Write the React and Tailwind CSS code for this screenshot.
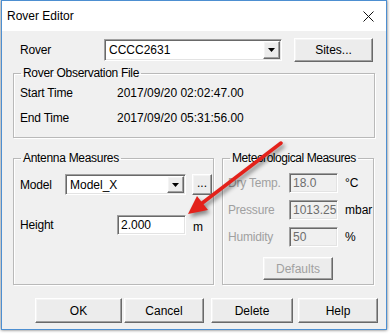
const sunken =
  'border border-t-[#a0a0a0] border-l-[#a0a0a0] border-r-white border-b-white shadow-[inset_1px_1px_0_#696969,inset_-1px_-1px_0_#e3e3e3]';
const raised =
  'border border-t-white border-l-white border-r-[#696969] border-b-[#696969] shadow-[inset_-1px_-1px_0_#a0a0a0,inset_1px_1px_0_#f4f4f4] bg-[#ececec]';
const group =
  'border border-[#b9b9b9] shadow-[inset_1px_1px_0_#fff,1px_1px_0_#fff] m-0 p-0 min-w-0';

const DropArrow = () => (
  <div className={`${raised} w-[17px] h-full flex items-center justify-center shrink-0`}>
    <svg width="7" height="4" viewBox="0 0 7 4">
      <path d="M0 0h7L3.5 4z" fill="#000" />
    </svg>
  </div>
);

const Combo = ({ value, className }) => (
  <div className={`${sunken} bg-white flex items-stretch p-[1px] ${className}`}>
    <div className="flex-1 flex items-center pl-[3px] text-[12px]">{value}</div>
    <DropArrow />
  </div>
);

const Button = ({ children, className, disabled }) => (
  <button
    type="button"
    className={`${raised} flex items-center justify-center text-[12px] ${disabled ? 'text-[#a0a0a0]' : 'text-black'} ${className}`}
  >
    {children}
  </button>
);

const Legend = ({ children, className = 'tracking-[-0.3px]' }) => (
  <legend className={`ml-[7px] px-[2px] text-[12px] leading-[14px] ${className}`}>{children}</legend>
);

const MeteoRow = ({ label, value, unit, className }) => (
  <div className={`flex items-center h-[20px] ${className}`}>
    <div className="w-[61px] text-[#a0a0a0] tracking-[-0.2px]">{label}</div>
    <div className={`${sunken} w-[49px] h-[20px] bg-[#f0f0f0] flex items-center pl-[3px] text-[#6d6d6d] text-[12px]`}>
      {value}
    </div>
    <div className="ml-[7px] text-[12px]">{unit}</div>
  </div>
);

export default function App() {
  return (
    <div className="w-[390px] h-[334px] bg-white relative overflow-hidden" style={{ fontFamily: '"Liberation Sans", Arial, sans-serif' }}>
      <div className="ml-[1px] w-[386px] h-[330px] border border-[#4d8fd1] bg-[#f0f0f0] flex flex-col shadow-[0_0_3px_rgba(0,0,0,0.6)] text-[12px] text-black">
        {/* title bar */}
        <div className="h-[30px] bg-white flex items-center justify-between pl-[5px] pr-[12px] shrink-0">
          <span className="text-[12px]">Rover Editor</span>
          <svg width="11" height="11" viewBox="0 0 11 11">
            <path d="M0.5 0.5L10.5 10.5M10.5 0.5L0.5 10.5" stroke="#111" strokeWidth="1" />
          </svg>
        </div>

        <div className="flex flex-col pl-[11px]">
          {/* rover row */}
          <div className="flex items-center h-[24px] mt-[7px] pl-[7px]">
            <div className="w-[84px] tracking-[-0.2px]">Rover</div>
            <Combo value="CCCC2631" className="w-[178px] h-[22px]" />
            <Button className="ml-[12px] w-[79px] h-[24px]">Sites...</Button>
          </div>

          {/* observation file */}
          <fieldset className={`${group} mt-[4px] w-[362px] h-[72px]`}>
            <Legend>Rover Observation File</Legend>
            <div className="flex items-center h-[16px] mt-[5px] pl-[6px]">
              <div className="w-[97px] tracking-[-0.2px]">Start Time</div>
              <div className="text-[12px]">2017/09/20 02:02:47.00</div>
            </div>
            <div className="flex items-center h-[16px] mt-[9px] pl-[6px]">
              <div className="w-[97px] tracking-[-0.2px]">End Time</div>
              <div className="text-[12px]">2017/09/20 05:31:56.00</div>
            </div>
          </fieldset>

          <div className="flex mt-[13px] gap-[8px]">
            {/* antenna */}
            <fieldset className={`${group} w-[201px] h-[134px]`}>
              <Legend>Antenna Measures</Legend>
              <div className="flex items-center h-[21px] mt-[9px] pl-[6px]">
                <div className="w-[45px] tracking-[-0.2px]">Model</div>
                <Combo value="Model_X" className="w-[121px] h-[21px]" />
                <Button className="ml-[6px] w-[20px] h-[21px] text-[#444] pb-[4px]">...</Button>
              </div>
              <div className="flex items-center h-[20px] mt-[20px] pl-[6px]">
                <div className="w-[97px] tracking-[-0.2px]">Height</div>
                <div className={`${sunken} w-[69px] h-[20px] bg-white flex items-center pl-[3px] text-[12px]`}>2.000</div>
                <div className="ml-[7px] mt-[3px]">m</div>
              </div>
            </fieldset>

            {/* meteorological */}
            <fieldset className={`${group} w-[152px] h-[134px] flex flex-col`}>
              <Legend className="tracking-[-0.45px]">Meteorological Measures</Legend>
              <div className="pl-[5px] flex flex-col">
                <MeteoRow label="Dry Temp." value="18.0" unit="°C" className="mt-[8px]" />
                <MeteoRow label="Pressure" value="1013.25" unit="mbar" className="mt-[7px]" />
                <MeteoRow label="Humidity" value="50" unit="%" className="mt-[7px]" />
              </div>
              <div className="flex justify-center mt-[10px]">
                <Button disabled className="w-[70px] h-[23px]">Defaults</Button>
              </div>
            </fieldset>
          </div>

          {/* bottom buttons */}
          <div className="flex mt-[13px] h-[25px] pl-[22px]">
            <Button className="w-[87px] h-[25px]">OK</Button>
            <Button className="ml-[2px] w-[80px] h-[25px]">Cancel</Button>
            <Button className="ml-[7px] w-[82px] h-[25px]">Delete</Button>
            <Button className="ml-[5px] w-[80px] h-[25px]">Help</Button>
          </div>
        </div>
      </div>

      {/* red arrow overlay */}
      <svg
        className="absolute left-0 top-0 pointer-events-none"
        width="390"
        height="334"
        viewBox="0 0 390 334"
        style={{ filter: 'drop-shadow(2px 3px 2px rgba(0,0,0,0.45))' }}
      >
        <path d="M281 143L201 204" stroke="#e3221b" strokeWidth="3.5" strokeLinecap="round" />
        <path d="M188 214L197 196L208 210Z" fill="#e3221b" />
      </svg>
    </div>
  );
}
